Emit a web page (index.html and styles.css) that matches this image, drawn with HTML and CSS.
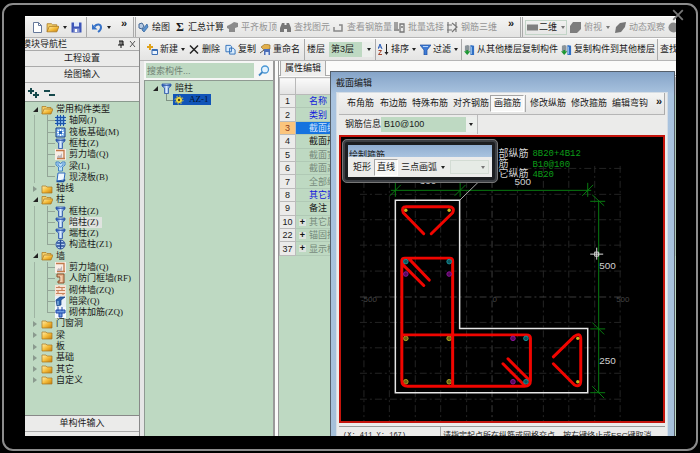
FILE: index.html
```html
<!DOCTYPE html>
<html>
<head>
<meta charset="utf-8">
<title>截面编辑</title>
<link rel="stylesheet" href="styles.css">
</head>
<body>
<svg class="defs" aria-hidden="true">
  <defs>
    <linearGradient id="gold" x1="0" y1="0" x2="1" y2="1"><stop offset="0" stop-color="#fff0b0"/><stop offset=".5" stop-color="#f5bd3c"/><stop offset="1" stop-color="#c57f0c"/></linearGradient>
    <linearGradient id="blue" x1="0" y1="0" x2="1" y2="0"><stop offset="0" stop-color="#2456b4"/><stop offset=".5" stop-color="#d8ebff"/><stop offset="1" stop-color="#2456b4"/></linearGradient>
  </defs>
  <symbol id="folder" viewBox="0 0 12 10"><path d="M1 2h4l1 1h5v6H1z" fill="url(#gold)" stroke="#a8741c" stroke-width=".7"/></symbol>
  <symbol id="open" viewBox="0 0 12 10"><path d="M1 9V1.500h4l1 1h4V4" fill="#f3cf6a" stroke="#a8741c" stroke-width=".7"/><path d="M1 9l2-5h9L10 9z" fill="url(#gold)" stroke="#a8741c" stroke-width=".7"/></symbol>
  <symbol id="column" viewBox="0 0 11 11"><path d="M1 1h9v2L7.500 5v5.500h-4V5L1 3z" fill="url(#blue)" stroke="#2b55a8" stroke-width=".8"/><path d="M1 2.500h9" stroke="#2b55a8" stroke-width=".8"/></symbol>
  <symbol id="grid" viewBox="0 0 11 11"><path d="M1 1h9v9H1z" fill="#7fb2e6"/><path d="M2.500 0v11M5.500 0v11M8.500 0v11M0 2.500h11M0 5.500h11M0 8.500h11" stroke="#1d54a6"/></symbol>
  <symbol id="raft" viewBox="0 0 11 11"><path d="M1 1h9v9H1z" fill="#8dbcf0" stroke="#173f86"/><path d="M3 3l5 5M8 3L3 8M5.500 2v7M2 5.500h7" stroke="#fff"/><path d="M4 4h3v3H4z" fill="#2b66bd"/></symbol>
  <symbol id="wall" viewBox="0 0 11 11"><path d="M0 0h11v11H0z" fill="#f8eee6"/><path d="M1 1.500h8V10M2 9.500h8" fill="none" stroke="#c27a4a" stroke-width="1.300"/><path d="M2 8l1.500-2L5 7l2-3v5H2z" fill="#bbb4b8"/></symbol>
  <symbol id="beam" viewBox="0 0 11 11"><path d="M1 1h3l1.500 2L7 1h3v3L7.500 6v4h-4V6L1 4z" fill="#bfe0fa" stroke="#347bc0" stroke-width=".9"/><path d="M3 2v2l2.500 2L8 4V2" fill="none" stroke="#347bc0" stroke-width=".8"/></symbol>
  <symbol id="slab" viewBox="0 0 11 11"><path d="M3 1h7l-1 7-7 1z" fill="#eef7ff" stroke="#2c68bf"/><path d="M1.500 9.500h7L10 7.500" fill="none" stroke="#1f4f9e" stroke-width="1.500"/></symbol>
  <symbol id="tie" viewBox="0 0 11 11"><circle cx="5.500" cy="5.500" r="4.500" fill="#b9d4f4" stroke="#244a97"/><path d="M5.500 1v9M2 4h7M2 7h7" stroke="#244a97" stroke-width="1.300"/></symbol>
  <symbol id="door" viewBox="0 0 11 11"><path d="M2 1h7v9H3V8h2V4H2z" fill="#e7b48c" stroke="#8a4d28"/><path d="M6 3v6" stroke="#fbe6d0"/></symbol>
  <symbol id="brick" viewBox="0 0 11 11"><path d="M0 0h11v11H0z" fill="#f6e2d4"/><path d="M1 2.500h9M1 5.500h9M1 8.500h9M4 1v2M7 3v3M3 6v3M8 8v2" stroke="#c9835c" stroke-width="1.100"/></symbol>
  <symbol id="hidden" viewBox="0 0 11 11"><path d="M0 0h11v11H0z" fill="#e8f0f8"/><path d="M1 4l4-3h5L6 4v5l-4 1z" fill="#2c64b0" stroke="#153d7c" stroke-width=".7"/><path d="M3 5v4" stroke="#a4d0f2"/></symbol>
  <symbol id="rebar" viewBox="0 0 11 11"><path d="M0 0h11v11H0z" fill="#f4f8fc"/><path d="M3 0v4M7 0v4M1 3h9v3H1zM4 6v4h3V6" fill="#6d9ae0" stroke="#1f49a8"/></symbol>
  <symbol id="copy" viewBox="0 0 12 12"><path d="M1 1.500h5l1 1v6H1zM5 4.500h4l2 2V11H5z" fill="#d9ebfb" stroke="#2e6fba"/></symbol>
  <symbol id="transfer" viewBox="0 0 12 12"><path d="M1 2l3-1 2 1v6H1z" fill="#8a9499" /><path d="M7 1l4 1v10H7z" fill="#2f6fc4"/><path d="M8 3v8" stroke="#a5cdf5"/><path d="M0 8h2.500V6.500h2V8H7l-3.500 4z" fill="#1c9632"/></symbol>
</svg>

<div class="frame">
  <button class="close" aria-label="关闭"><svg viewBox="0 0 10 10"><path d="M1 1l8 8M9 1L1 9"/></svg></button>
  <div class="screen">
    <div class="bar main-bar">
      <button aria-label="新建文件"><svg class="ic" viewBox="0 0 11 11"><path d="M1.500.5h5l3 3v7h-8z" fill="#fff" stroke="#65789a"/><path d="M6.500.5v3h3" fill="none" stroke="#65789a"/></svg></button>
      <button aria-label="打开"><svg class="ic wide"><use href="#open"/></svg><i class="caret"></i></button>
      <button aria-label="保存"><svg class="ic" viewBox="0 0 11 11"><path d="M.5.5h10v10H.5z" fill="#3d55b8"/><path d="M3 0h5v4.500H3z" fill="#dfe9f8"/><path d="M2.500 6.500h6V10h-6z" fill="#8c9ad2"/><path d="M4 7h2v3H4z" fill="#fff"/></svg></button>
      <button class="sep undo" aria-label="撤销"><svg class="ic" viewBox="0 0 11 11"><path d="M2.500 4.500C5 1.500 9 2 9 5.500 9 8 7.500 9 6 10" fill="none" stroke="#3672c8" stroke-width="2"/><path d="M0 2v5.500h5.500z" fill="#3672c8"/></svg><i class="caret"></i></button>
      <button class="more">»</button>
      <button class="sep dbl"><svg class="ic" viewBox="0 0 11 11"><path d="M1 2l3-1 2 3-2 3-3-1z" fill="#b7cbe4" stroke="#426796"/><path d="M9 2L4 8l2 2 4-5z" fill="#5b93cf" stroke="#2e5f99" stroke-width=".7"/></svg>绘图</button>
      <button><b class="sigma">Σ</b>汇总计算</button>
      <button class="off"><svg class="ic" viewBox="0 0 11 11"><path d="M0 4l4-2 3-2 4 1v4L8 6v4H2V7L0 6z" fill="#8b8b8b"/></svg>平齐板顶</button>
      <button class="off"><svg class="ic" viewBox="0 0 11 11"><path d="M2 1h2.500v2h2V1H9l2 5v4H7V7H4v3H0V6z" fill="#777"/></svg>查找图元</button>
      <button class="off"><svg class="ic" viewBox="0 0 11 11"><path d="M1 5v4h8V3H6" fill="none" stroke="#888" stroke-width="1.500"/></svg>查看钢筋量</button>
      <button class="off"><svg class="ic" viewBox="0 0 11 11"><path d="M1 0v7M3 0v7M0 8h5M6 2h4v8H6zM7 5h2" fill="none" stroke="#777" stroke-width="1.300"/></svg>批量选择</button>
      <button class="off"><svg class="ic" viewBox="0 0 11 11"><path d="M1 0v11M0 3h5M0 8h5M5 1l5 4-5 5M9 0v10" fill="none" stroke="#777" stroke-width="1.200"/></svg>钢筋三维</button>
      <button class="more">»</button>
      <button class="sep dbl view"><span class="boxed"><svg class="ic" viewBox="0 0 11 11"><path d="M0 2.500h11v6H0z" fill="#808080"/></svg>二维<i class="caret"></i></span></button>
      <button class="off"><svg class="ic" viewBox="0 0 11 11"><path d="M0 4l3-4h8v7l-4 4H0z" fill="#7d7d7d"/></svg>俯视<i class="caret"></i></button>
      <button class="off"><svg class="ic" viewBox="0 0 11 11"><path d="M0 11l1-6 4-4 6-1-1 5-4 5z" fill="#777"/></svg>动态观察</button>
      <button class="off"><svg class="ic" viewBox="0 0 11 11"><circle cx="5.500" cy="5.500" r="5" fill="#888"/></svg></button>
    </div>

    <div class="columns">
      <aside class="nav">
        <header class="nav-title"><span>模块导航栏</span><svg class="pin" viewBox="0 0 20 8"><path d="M2 1h4v4M3 1v4M1 5h6M4 5v3M5 1v4" stroke="#111" fill="none"/><path d="M13 1l5 6M18 1l-5 6" stroke="#555"/></svg></header>
        <button class="section">工程设置</button>
        <button class="section">绘图输入</button>
        <div class="tools"><svg viewBox="0 0 30 12"><path d="M0 4h6M3 1v6M5 8h6M8 5v6M16 4h6M21 8h6" stroke="#16494c" stroke-width="2"/></svg></div>
        <ul class="tree">
          <li class="top is-open"><svg class="fold"><use href="#open"/></svg>常用构件类型</li>
          <li class="sub"><svg><use href="#grid"/></svg>轴网(J)</li>
          <li class="sub"><svg><use href="#raft"/></svg>筏板基础(M)</li>
          <li class="sub"><svg><use href="#column"/></svg>框柱(Z)</li>
          <li class="sub"><svg><use href="#wall"/></svg>剪力墙(Q)</li>
          <li class="sub"><svg><use href="#beam"/></svg>梁(L)</li>
          <li class="sub last"><svg><use href="#slab"/></svg>现浇板(B)</li>
          <li class="top"><svg class="fold"><use href="#folder"/></svg>轴线</li>
          <li class="top is-open"><svg class="fold"><use href="#open"/></svg>柱</li>
          <li class="sub"><svg><use href="#column"/></svg>框柱(Z)</li>
          <li class="sub current"><svg><use href="#column"/></svg><span>暗柱(Z)</span></li>
          <li class="sub"><svg><use href="#column"/></svg>端柱(Z)</li>
          <li class="sub last"><svg><use href="#tie"/></svg>构造柱(Z1)</li>
          <li class="top is-open"><svg class="fold"><use href="#open"/></svg>墙</li>
          <li class="sub"><svg><use href="#wall"/></svg>剪力墙(Q)</li>
          <li class="sub"><svg><use href="#door"/></svg>人防门框墙(RF)</li>
          <li class="sub"><svg><use href="#brick"/></svg>砌体墙(ZQ)</li>
          <li class="sub"><svg><use href="#hidden"/></svg>暗梁(Q)</li>
          <li class="sub last"><svg><use href="#rebar"/></svg>砌体加筋(ZQ)</li>
          <li class="top"><svg class="fold"><use href="#folder"/></svg>门窗洞</li>
          <li class="top"><svg class="fold"><use href="#folder"/></svg>梁</li>
          <li class="top"><svg class="fold"><use href="#folder"/></svg>板</li>
          <li class="top"><svg class="fold"><use href="#folder"/></svg>基础</li>
          <li class="top"><svg class="fold"><use href="#folder"/></svg>其它</li>
          <li class="top"><svg class="fold"><use href="#folder"/></svg>自定义</li>
        </ul>
        <button class="section">单构件输入</button>
        <div class="nav-end"></div>
      </aside>

      <div class="work">
        <div class="bar edit-bar">
          <button><svg class="ic" viewBox="0 0 11 11"><path d="M3 0v6M0 3h6" stroke="#e0a21a" stroke-width="2"/><path d="M5 5.500h5.500v5H5z" fill="#eaf3fd" stroke="#3c6fb5"/><path d="M5 6.500h5" stroke="#3c6fb5"/></svg>新建<i class="caret"></i></button>
          <button><svg class="ic" viewBox="0 0 11 11"><path d="M1 1.500l8 8M9 1.500l-8 8" stroke="#222" stroke-width="1.500"/></svg>删除</button>
          <button><svg class="ic"><use href="#copy"/></svg>复制</button>
          <button><svg class="ic" viewBox="0 0 11 11"><path d="M1 3l4-3 5 1v4L4 6z" fill="#e2b04c" stroke="#8b6420" stroke-width=".6"/><path d="M4 5h6v6H4z" fill="#4c6fb8"/><path d="M5.500 8h3v3h-3z" fill="#dfe9f8"/><path d="M0 9l4-3" stroke="#555"/></svg>重命名</button>
          <label class="sep" for="floor">楼层</label>
          <div class="pick"><select id="floor"><option>第3层</option></select><i class="caret"></i></div>
          <button class="sep"><svg class="ic" viewBox="0 0 11 11"><path d="M0 5l2-5 2 5M1 3h2" fill="none" stroke="#2a5db8"/><path d="M.5 6.500h3L.5 10.500h3.500" fill="none" stroke="#a3432a"/><path d="M8.500 0v9" stroke="#222"/><path d="M6.500 8h4l-2 3z" fill="#222"/></svg>排序<i class="caret"></i></button>
          <button><svg class="ic" viewBox="0 0 11 11"><path d="M0 1h11L7 6v5H4V6z" fill="#3e7bd6" stroke="#1e4f9f" stroke-width=".7"/><path d="M3 2.500h5" stroke="#b5d5fa"/></svg>过滤<i class="caret"></i></button>
          <button class="sep"><svg class="ic"><use href="#transfer"/></svg>从其他楼层复制构件</button>
          <button><svg class="ic"><use href="#transfer"/></svg>复制构件到其他楼层</button>
          <button class="sep">查找</button>
        </div>

        <div class="panes">
          <section class="members">
            <div class="search"><input type="text" placeholder="搜索构件..." aria-label="搜索构件"><svg viewBox="0 0 12 12"><circle cx="7" cy="4.500" r="3.500" fill="#e4f3ff" stroke="#4a97d4" stroke-width="1.300"/><path d="M4.500 7L1 10.500" stroke="#3f86c4" stroke-width="1.800"/></svg></div>
            <ul class="member-tree">
              <li class="top is-open"><svg><use href="#column"/></svg>暗柱</li>
              <li class="leaf"><span><svg viewBox="0 0 10 10"><circle cx="5" cy="5" r="3" fill="#f3dc3c"/><circle cx="5" cy="5" r="4" fill="none" stroke="#e8d040" stroke-dasharray="1.500 1.600"/><circle cx="5" cy="5" r="1.200" fill="#554a10"/></svg>AZ-1</span></li>
            </ul>
          </section>

          <section class="props">
            <div class="tabs"><button>属性编辑</button></div>
            <table>
              <thead><tr><th></th><th></th></tr></thead>
              <tbody>
                <tr class="link"><td>1</td><td>名称</td></tr>
                <tr class="link"><td>2</td><td>类别</td></tr>
                <tr class="picked"><td>3</td><td>截面编辑</td></tr>
                <tr><td>4</td><td>截面形状</td></tr>
                <tr class="dim"><td>5</td><td>截面宽</td></tr>
                <tr class="dim"><td>6</td><td>截面高</td></tr>
                <tr class="dim"><td>7</td><td>全部纵筋</td></tr>
                <tr class="link"><td>8</td><td>其它箍筋</td></tr>
                <tr><td>9</td><td>备注</td></tr>
                <tr class="dim group"><td>10</td><td>其它属性</td></tr>
                <tr class="dim group"><td>22</td><td>锚固搭接</td></tr>
                <tr class="dim group"><td>37</td><td>显示样式</td></tr>
              </tbody>
            </table>
          </section>

          <section class="dialog">
            <h2>截面编辑</h2>
            <div class="dialog-body">
              <div class="bar tool-bar">
                <button>布角筋</button><button>布边筋</button><button>特殊布筋</button><button>对齐钢筋</button><button class="pressed">画箍筋</button><button class="sep">修改纵筋</button><button>修改箍筋</button><button>编辑弯钩</button><button class="more">»</button>
              </div>
              <div class="info"><div class="info-group"><label for="bar-info">钢筋信息</label><div class="pick"><select id="bar-info"><option>B10@100</option></select><i class="caret"></i></div></div></div>
              <div class="canvas">
                <svg viewBox="341 136 323 285">
                  <g class="lattice">
                    <path d="M364 165V421M389.500 165V421M415.500 165V421M441 165V421M467 165V421M518 165V421M544 165V421M569.500 165V421M595.500 165V421M621 165V421"/>
                    <path d="M360 167.500H625M360 193.500H625M360 219H625M360 244.500H625M360 270.500H625M360 322H625M360 347.500H625M360 373H625M360 399H625"/>
                    <path class="axis" d="M492.500 165V421M360 296.500H625"/>
                  </g>
                  <g class="faint"><text x="361" y="302">-500</text><text x="493" y="302">0</text><text x="617" y="302">500</text></g>
                  <g class="dims">
                    <path d="M391 189.500H592M395.500 182V196M460.500 182V196M588.500 182V196M390 195L401 184M455 195L466 184M583 195L594 184"/>
                    <path d="M599.500 200V393M591 200.500H606M591 328.500H606M591 392.500H606M593 194L605 205M593 322L605 334M593 386L605 398"/>
                  </g>
                  <path class="leader" d="M460 199.500L479 181"/>
                  <path class="outline" d="M395.500 199.500H460V328H588.500V392.500H395.500Z"/>
                  <g class="spot yellow"><circle cx="406" cy="338" r="2.300"/><circle cx="449.500" cy="338" r="2.300"/><circle cx="406" cy="381.500" r="2.300"/><circle cx="449.500" cy="381.500" r="2.300"/></g>
                  <g class="stirrup">
                    <path d="M424 233L403.500 212Q401 206 406.500 206H449Q455.500 206 453 212L431.500 233"/>
                    <path d="M424 285L404 265Q402 263 402 260.500Q402 257.500 405 257.500H450Q453 257.500 453 260.500V386M402 260V380Q402 386 408 386H525Q531 386 531 380V338Q531 334.500 527 334.500H402M409 258L429.500 279.500"/>
                    <path d="M508.500 358.500L530 380M503.500 363.500L525 385"/>
                    <path d="M554 356.500L575 336Q581.500 331.500 581.500 339V380Q581.500 388 575 384.500L554 363.500"/>
                  </g>
                  <g fill="#c8b820"><circle cx="406" cy="209.500" r="1.700"/><circle cx="449.500" cy="209.500" r="1.700"/><circle cx="578.500" cy="338" r="1.700"/><circle cx="578.500" cy="381.500" r="1.700"/></g>
                  <g class="spot cyan"><circle cx="406" cy="261" r="2.300"/><circle cx="449.500" cy="261" r="2.300"/><circle cx="526.500" cy="338" r="2.300"/><circle cx="526.500" cy="381.500" r="2.300"/></g>
                  <g class="spot magenta"><circle cx="406" cy="273.500" r="2.300"/><circle cx="449.500" cy="273.500" r="2.300"/><circle cx="513.500" cy="338" r="2.300"/><circle cx="513.500" cy="381.500" r="2.300"/></g>
                  <g class="size"><text x="420" y="183">300</text><text x="515" y="184">500</text><text x="600" y="268">500</text><text x="600" y="364">250</text></g>
                  <g class="note"><text x="499" y="156">部纵筋</text><text x="499" y="166">筋</text><text x="499" y="176">它纵筋</text></g>
                  <g class="spec"><text x="533" y="155">8B20+4B12</text><text x="533" y="166">B10@100</text><text x="533" y="176">4B20</text></g>
                  <path class="cursor" d="M591 253.500H604M597.500 247V259M595.500 251.500h4v4h-4z"/>
                </svg>
                <div class="floater">
                  <h3>绘制箍筋</h3>
                  <div class="floater-row"><button>矩形</button><button class="pressed">直线</button><button>三点画弧<i class="caret"></i></button><div class="pick"><select aria-label="画弧方式" disabled><option></option></select><i class="caret"></i></div></div>
                </div>
              </div>
              <footer class="status"><span>(X: 411 Y: 167)</span><span>请指定起点所在纵筋或网格交点，按右键终止或ESC键取消</span></footer>
            </div>
          </section>
        </div>
      </div>
    </div>
  </div>
</div>
</body>
</html>
```
FILE: styles.css
```css
* { box-sizing: border-box; }
html, body { height: 100%; }
body {
  margin: 0;
  padding: 3px 2px 2px;
  background: #000;
  color: #1a1a1a;
  font: 9px/11px "Liberation Sans", "Noto Sans CJK SC", sans-serif;
}
ul, h2, h3 { margin: 0; padding: 0; list-style: none; font-weight: normal; }
button, input, select {
  margin: 0; padding: 0; border: 0; border-radius: 0;
  background: none; color: inherit; font: inherit;
}
button, label, li, td, h2, h3, span { white-space: nowrap; }
select { appearance: none; }
.defs { position: absolute; width: 0; height: 0; }

.frame {
  position: relative;
  height: 100%;
  padding: 11px 20px 13px 21px;
  border: 2px solid #8c8c8c;
  border-radius: 11px;
}
.close { position: absolute; top: 4px; right: 12px; width: 12px; height: 12px; z-index: 3; }
.close svg { display: block; width: 12px; height: 12px; stroke: #777; stroke-width: 1.5; }
.screen { display: flex; flex-direction: column; height: 100%; overflow: hidden; background: #ebebea; }

.bar { background: linear-gradient(#f4f4f3, #e4e4e3); border-bottom: 1px solid #b5b5b5; }
.bar button, .bar label { display: flex; align-items: center; gap: 3px; text-align: left; }
.ic { flex: none; width: 11px; height: 11px; }
.ic.wide { width: 13px; }
.caret { flex: none; width: 4px; border: 2px solid transparent; border-top: 3px solid #222; border-bottom: 0; margin-left: 1px; }
.bar .sep { border-left: 1px solid #aaa; }
.bar .dbl { border-left: 3px double #aaa; }
.bar .off { color: #949494; }
.off .caret { border-top-color: #777; }
.bar .more { align-items: flex-start; font-size: 11px; line-height: 13px; font-weight: bold; }
.sigma { font: bold 12px/12px "Liberation Serif", serif; width: 9px; }

.main-bar {
  display: grid; flex: none;
  grid-template-columns: 14px 25px 15px 35px 12px 43px 51px 53px 53px 61px 53px 61px 12px 50px 45px 53px 8px;
  height: 22px; padding-left: 7px; overflow: hidden;
  border-top: 1px solid #fff;
}
.main-bar .undo { padding-left: 5px; }
.main-bar .dbl { padding-left: 2px; }
.boxed { display: flex; align-items: center; gap: 1px; height: 15px; padding: 0 1px; border: 1px solid #c2d4c7; }
.boxed .caret { margin-left: 3px; border-top-color: #777; }

.columns { display: flex; flex: 1; min-height: 0; }
.nav { display: flex; flex-direction: column; width: 115px; flex: none; border-right: 1px solid #888; }
.nav-title { display: flex; justify-content: space-between; align-items: center; flex: none; height: 13px; overflow: hidden; border-bottom: 1px solid #aaa; }
.nav-title span { margin-left: -3px; }
.pin { width: 20px; height: 8px; margin-right: 2px; }
.section { flex: none; height: 16px; border-bottom: 1px solid #aaa; text-align: center; }
.tools { flex: none; height: 19px; padding: 4px 3px; border-bottom: 1px solid #8a9a8e; }
.tools svg { display: block; width: 30px; height: 12px; }
.tree { display: grid; grid-auto-rows: 1fr; height: 314px; flex: none; padding: 2px 0 29px; border-bottom: 1px solid #888; }
.tree, .member-tree { font-family: "Liberation Serif", "Noto Sans CJK SC", serif; background: #bed9c2; }
.tree li { position: relative; display: flex; align-items: center; gap: 3px; min-height: 0; line-height: 11px; }
.tree svg { flex: none; width: 11px; height: 11px; }
.tree .fold { width: 12px; height: 10px; }
.top { padding-left: 16px; }
.sub { padding-left: 30px; }
.top::before {
  content: ""; position: absolute; left: 8px; top: 50%; margin-top: -3px;
  border: 3px solid transparent; border-left: 4px solid #8a9a8e; border-right: 0;
}
.top.is-open::before { border: 0; border-left: 5px solid transparent; border-bottom: 5px solid #222; }
.sub::before { content: ""; position: absolute; left: 22px; top: 0; bottom: 0; width: 7px; border-left: 1px solid #93a597; background: linear-gradient(#93a597, #93a597) 0 50% / 7px 1px no-repeat; }
.sub::after { content: ""; position: absolute; left: 9px; top: 0; bottom: 0; width: 1px; background: #9fb4a3; }
.sub.last::before { bottom: 50%; background-position: 0 100%; }
.current span { padding-right: 3px; background: #dfe3df; }
.nav-end { flex: 1; }

.work { display: flex; flex-direction: column; flex: 1; min-width: 0; }
.edit-bar {
  display: grid; flex: none; height: 23px; padding-left: 7px; overflow: hidden;
  grid-template-columns: 42px 36px 35px 44px 24px 47px 45px 41px 100px 96px 30px;
  border-top: 1px solid #fff;
}
.edit-bar .sep { padding-left: 2px; }
.edit-bar button { gap: 2px; }
.pick { display: flex; align-items: center; position: relative; }
.pick select { width: 100%; height: 15px; padding-left: 2px; background: #bed9c2; border-right: 11px solid #ecefec; }
.pick .caret { position: absolute; right: 4px; }
.edit-bar .pick { padding: 0 2px 0 1px; }

.panes { position: relative; display: flex; flex: 1; min-height: 0; background: #fbfbfa; }
.members { display: flex; flex-direction: column; width: 135px; flex: none; padding-left: 4px; background: #e6e6e6; border-right: 2px solid #9a9a9a; }
.search { display: flex; align-items: center; gap: 4px; height: 20px; flex: none; padding: 0 3px 0 2px; background: #f6f6f5; border-bottom: 1px solid #8f9a92; }
.search input { flex: 1; min-width: 0; height: 15px; padding-left: 1px; background: #bed9c2; }
.search input::placeholder { color: #6f7f73; opacity: 1; }
.search svg { width: 12px; height: 12px; }
.member-tree { flex: 1; padding-top: 2px; border-left: 1px solid #8f9a92; }
.member-tree li { position: relative; display: flex; align-items: center; gap: 3px; height: 11px; }
.member-tree svg { width: 11px; height: 11px; }
.member-tree .leaf { padding-left: 28px; }
.leaf::before { content: ""; position: absolute; left: 21px; top: 0; width: 6px; height: 6px; border: solid #7f9384; border-width: 0 0 1px 1px; }
.leaf span { display: flex; align-items: center; gap: 5px; height: 11px; padding: 0 2px 0 1px; background: #1054b8; color: #04142e; }
.leaf svg { width: 10px; height: 10px; }

.props { flex: 1; min-width: 0; margin-left: 3px; background: linear-gradient(#fbfbfa 20px, #bed9c2 20px); border-left: 1px solid #999; }
.tabs { height: 15px; padding-left: 1px; border-bottom: 1px solid #aaa; }
.tabs button { height: 15px; padding: 0 4px; background: #efefee; border: 1px solid #aaa; border-top: 0; border-bottom: 0; }
.props table { width: 100%; height: 179px; margin-top: 1px; border-collapse: collapse; table-layout: fixed; line-height: 10px; }
.props th { height: 17px; background: linear-gradient(#fafafa, #e2e2e2); border: 1px solid #b9b9b9; }
.props th:first-child { width: 16px; }
.props td { padding: 0; border: 1px solid #b0c9b5; background: #bed9c2; }
.props td:first-child { text-align: center; background: #ebebea; border-color: #bbb; }
.props td:last-child { position: relative; padding-left: 13px; }
.props .link td:last-child { color: #1420dc; }
.props .dim td:last-child { color: #778b7c; }
.props .picked td { background: #1673df; color: #cde4ff; }
.props .picked td:first-child { background: #fbc57d; color: #8a3c20; }
.group td:last-child::before { content: "+"; position: absolute; left: 3px; top: 3px; width: 7px; height: 7px; background: #dde3de; color: #111; font-weight: bold; line-height: 7px; text-align: center; }

.dialog {
  position: absolute; left: 190px; right: 1px; top: 10px; bottom: 0;
  display: flex; flex-direction: column;
  padding: 0 6px 0 5px; overflow: hidden;
  background: linear-gradient(#85a4c8, #a9c3df 22px, #a6c0da);
  border: 1px solid #555f6a; border-bottom: 0;
}
.dialog h2 { flex: none; height: 20px; font-size: 9px; line-height: 22px; }
.dialog-body { display: flex; flex-direction: column; flex: 1; min-height: 0; padding: 0 2px; background: #ebebea; border: 1px solid #d5dde5; border-bottom: 0; }
.tool-bar {
  display: grid; flex: none; height: 22px; padding: 2px 0 2px 8px;
  grid-template-columns: 33px 32px 41px 37px 35px 46px 41px 44px 10px;
  border-right: 1px solid #aaa;
}
.tool-bar .sep { padding-left: 4px; }
.pressed { background: #f8f8f7; border: 1px solid #a5a5a5; border-right-color: #fff; border-bottom-color: #fff; }
.tool-bar .pressed { padding-left: 3px; margin-right: 1px; }
.info { flex: none; height: 20px; }
.info-group { display: flex; align-items: center; width: 139px; height: 19px; padding-left: 6px; border-right: 1px solid #bbb; }
.info .pick { flex: 1; }
.info .pick select { padding-left: 3px; }

.canvas { position: relative; flex: none; background: #000; border: 2px solid #c5140c; }
.canvas > svg { display: block; width: 100%; }
.lattice { fill: none; stroke: #242424; stroke-dasharray: 7 3 2 3; }
.lattice .axis { stroke: #3c3c3c; }
.faint { fill: #444; font-size: 8px; }
.dims { fill: none; stroke: #087a10; }
.leader { stroke: #aaa; }
.outline { fill: none; stroke: #e6e6e6; stroke-width: 1.5; }
.stirrup { fill: none; stroke: #f00500; stroke-width: 3; stroke-linecap: round; stroke-linejoin: round; }
.spot { fill-opacity: .6; }
.yellow { fill: #b0a420; stroke: #b0a420; }
.cyan { fill: #15909a; stroke: #15909a; }
.magenta { fill: #8d129a; stroke: #8d129a; }
.size { fill: #d0d0d0; font-size: 10px; }
.note { fill: #d5d5d5; font-size: 10px; }
.spec { fill: #0c9c18; font: 9px "Liberation Mono", monospace; }
.cursor { fill: none; stroke: #ddd; }

.floater {
  position: absolute; left: 1px; top: 2px; width: 156px; padding: 3px;
  background: #1c1e21; border: 3px solid #3c3f44; border-radius: 5px;
  outline: 1px solid #777; outline-offset: -1px;
}
.floater h3 { height: 12px; padding-left: 1px; overflow: hidden; background: linear-gradient(#8fadd0, #a9c3df); font-size: 9px; line-height: 21px; }
.floater-row { display: flex; align-items: center; height: 20px; padding: 0 3px 0 5px; gap: 3px; background: #ececeb; }
.floater-row button { display: flex; align-items: center; gap: 3px; height: 17px; }
.floater-row .pressed { padding: 0 2px; }
.floater-row .pick { flex: 1; margin-left: 2px; }
.floater-row select { height: 14px; background: #e6ebe6; border: 1px solid #d3dcd4; opacity: 1; }
.floater-row .pick .caret { border-top-color: #777; }

.status { display: flex; flex: none; height: 20px; margin-top: 3px; border-top: 1px solid #999; font-size: 8px; line-height: 17px; }
.status span:first-child { width: 102px; padding-left: 4px; font: 7px/17px "Liberation Mono", monospace; border-right: 1px solid #aaa; }
.status span:last-child { padding-left: 2px; }
```
